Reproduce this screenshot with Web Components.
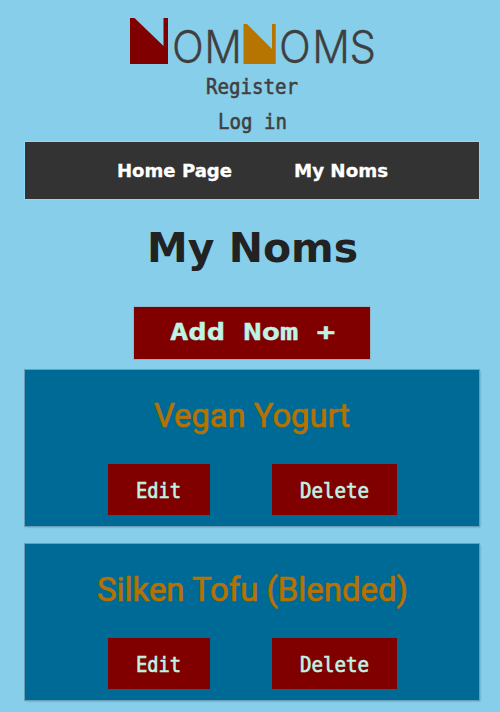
<!DOCTYPE html>
<html lang="en"><head><meta charset="utf-8"><title>NomNoms</title>
<style>
html,body{margin:0;background:#87ceeb;height:712px;overflow:hidden}
</style></head><body>
<nom-app></nom-app>
<script>
const define=(name,html)=>customElements.define(name,class extends HTMLElement{
  connectedCallback(){
    if(this.shadowRoot)return;
    this.attachShadow({mode:'open'}).innerHTML=typeof html==='function'?html(this):html;
  }
});
// One line of lettering fitted to a given advance width.
const faces={
  mono:"400 {s}px 'DejaVu Sans Mono',monospace",
  pixel:"700 {s}px 'DejaVu Sans Mono',monospace",
  wide:"700 {s}px 'DejaVu Sans',sans-serif",
  title:"400 {s}px 'Roboto','Liberation Sans',sans-serif"
};
define('type-line',el=>{
  const w=el.getAttribute('w'),s=+el.getAttribute('size'),h=Math.ceil(s*1.2),b=Math.round(s*.93);
  return `<style>:host{display:block;width:${w}px;height:${h}px;flex:none}svg{display:block;overflow:visible}
  text{font:${faces[el.getAttribute('face')].replace('{s}',s)};fill:currentColor;stroke:currentColor;stroke-width:${el.getAttribute('stroke')||0}}</style>
  <svg width="${w}" height="${h}"><text x="0" y="${b}" textLength="${w}" lengthAdjust="spacingAndGlyphs">${el.getAttribute('text')}</text></svg>`;
});
define('nom-logo',`<style>:host{display:block;width:248px;height:48px;color:#3f3f3f}svg{display:block;overflow:visible}
text{font:300 45px 'Inter','Roboto',sans-serif;fill:currentColor;stroke:currentColor;stroke-width:.3}</style>
<svg width="248" height="48" viewBox="128 17 248 48" role="img" aria-label="NomNoms">
<path fill="#800000" d="M130 18h4.500L163.500 46V18H168V64H130Z"/>
<path fill="#b57500" d="M243.500 24H247L272 49V24h3.700V64H243.500Z"/>
<g transform="scale(.93 1)"><text x="185 219.600" y="63.500">OM</text>
<text x="300 335.700 375.800" y="63.500">OMS</text></g></svg>`);
define('nom-nav',`<style>:host{display:flex;box-sizing:border-box;width:454px;height:56.500px;background:#333;color:#fff;padding:18px 0 0 92px;gap:62px;box-shadow:0 0 0 1px #8bdcf8}</style><slot></slot>`);
define('nom-button',`<style>:host{display:flex;box-sizing:border-box;justify-content:center;background:#800000;color:#bdf5e5;height:51.500px;padding-top:14px;flex:none}</style><slot></slot>`);
define('nom-card',`<style>:host{display:flex;flex-direction:column;align-items:center;box-sizing:border-box;width:454px;height:156px;background:#006a96;box-shadow:0 0 0 1px #669fb7,1px 1px 2px #4b91b0;padding-top:27px}
.title{color:#b57200;height:67px}.actions{display:flex;gap:62px}</style>
<div class="title"><slot></slot></div><div class="actions">
<nom-button style="width:102px"><type-line text="Edit" face="mono" size="22" w="45" stroke=".7"></type-line></nom-button>
<nom-button style="width:125px"><type-line text="Delete" face="mono" size="22" w="69" stroke=".7"></type-line></nom-button></div>`);
define('nom-app',`<style>
:host{display:flex;flex-direction:column;align-items:center;box-sizing:border-box;width:500px;height:712px;padding:17px 0 0 4px;background:#87ceeb}
:host>*{flex:none}
.account{display:flex;flex-direction:column;align-items:center;gap:8px;color:#413f3e;height:68px;padding-top:9px}
.heading{color:#222;margin-top:25px;height:83px}
.add{width:236px;height:52.500px;padding-top:12px;box-shadow:0 0 0 1px #94b5c5}
.list{display:flex;flex-direction:column;gap:18px;margin-top:10.500px}
</style>
<nom-logo></nom-logo>
<div class="account"><type-line text="Register" face="mono" size="22" w="92" stroke=".6"></type-line>
<type-line text="Log in" face="mono" size="22" w="69" stroke=".6"></type-line></div>
<nom-nav><type-line text="Home Page" face="wide" size="18" w="115" stroke=".3"></type-line><type-line text="My Noms" face="wide" size="18" w="94" stroke=".3"></type-line></nom-nav>
<div class="heading"><type-line text="My Noms" face="wide" size="41" w="211"></type-line></div>
<nom-button class="add"><type-line text="Add Nom +" face="pixel" size="23" w="165" stroke=".4"></type-line></nom-button>
<div class="list">
<nom-card><type-line text="Vegan Yogurt" face="title" size="32.5" w="196" stroke=".7"></type-line></nom-card>
<nom-card><type-line text="Silken Tofu (Blended)" face="title" size="32.5" w="311" stroke=".7"></type-line></nom-card>
</div>`);
</script></body></html>
